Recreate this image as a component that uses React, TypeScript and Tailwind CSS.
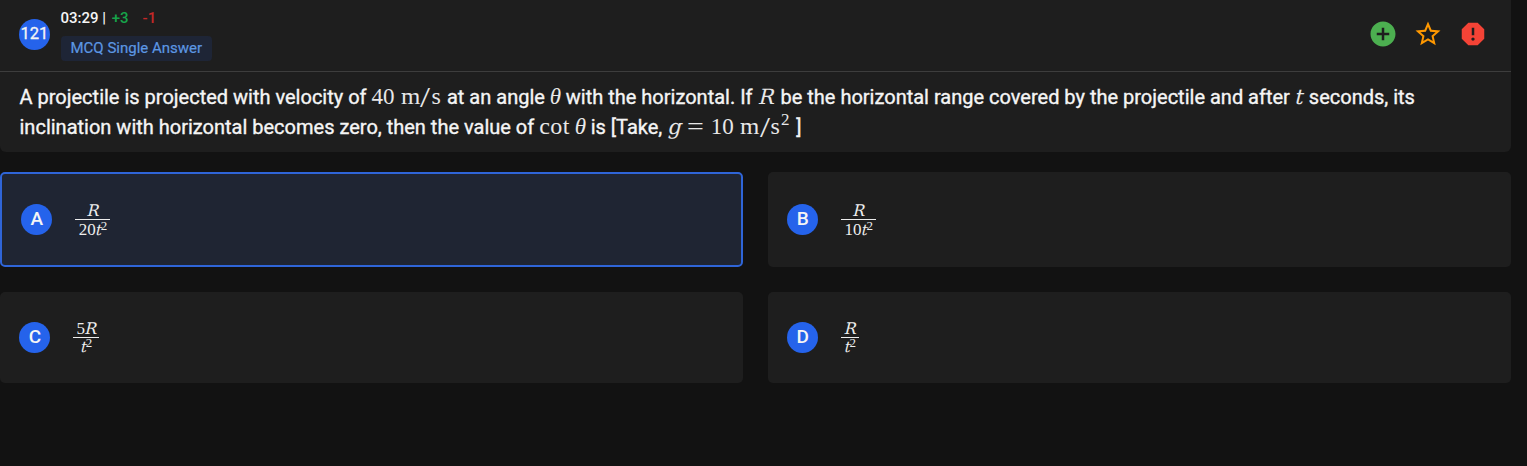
import React from "react";
import { MdAddCircle, MdReport, MdStarBorder } from "react-icons/md";

const options = [
  { label: "A", numerator: "R", coefficient: "20", bar: "w-[35px]", selected: true },
  { label: "B", numerator: "R", coefficient: "10", bar: "w-[35px]", selected: false },
  { label: "C", numerator: "5R", coefficient: "", bar: "w-[26px]", selected: false },
  { label: "D", numerator: "R", coefficient: "", bar: "w-[18px]", selected: false },
];

const Variable = ({
  children,
  className = "text-[21px]",
}: {
  children: React.ReactNode;
  className?: string;
}) => (
  <i className={`font-['DejaVu_Math_TeX_Gyre','Liberation_Serif',serif] ${className}`}>
    {children}
  </i>
);

const Formula = ({
  children,
  className = "",
}: {
  children: React.ReactNode;
  className?: string;
}) => (
  <span
    className={`inline-flex items-baseline h-5 whitespace-nowrap font-['Liberation_Serif',serif] font-normal text-[23px] leading-[20px] text-[#e8e8e8] [-webkit-text-stroke:0] ${className}`}
  >
    {children}
  </span>
);

const MetersPerSecond = () => (
  <>
    <span className="inline-block origin-left scale-x-108">m</span>
    <span className="ml-[2px] w-[11px] text-[30px] leading-[20px] origin-left scale-x-120 translate-y-[3px]">
      /
    </span>
    <span className="text-[24px]">s</span>
  </>
);

const Fraction = ({
  numerator,
  coefficient,
  bar,
}: {
  numerator: string;
  coefficient: string;
  bar: string;
}) => (
  <div
    className={`flex flex-col items-center mt-px font-['Liberation_Serif',serif] font-normal text-[17px] text-[#ededed] ${bar}`}
  >
    <span className="flex items-center h-[17px] leading-[18px]">
      {numerator.replace("R", "")}
      <Variable className="ml-[-1px] text-[16px] leading-[20px]">R</Variable>
    </span>
    <span className="bg-[#ededed] w-full h-px" />
    <span className="flex items-baseline h-[18px] leading-[19px]">
      {coefficient}
      <Variable className="ml-[-1px] text-[15px] leading-[19px]">t</Variable>
      <span className="-translate-y-[5px] text-[13px] leading-none">2</span>
    </span>
  </div>
);

const QuestionHeader = () => (
  <header className="flex justify-between items-center pr-[23px] pl-[19.5px] border-[#3d3d3d] border-b h-[72px]">
    <div className="flex items-center gap-[10.5px]">
      <div className="flex justify-center items-center bg-[#2563eb] mt-[-3px] ml-[-0.5px] rounded-full w-[31px] h-[31px] font-normal text-[16.5px] [-webkit-text-stroke:0.3px]">
        121
      </div>
      <div className="flex flex-col items-start gap-2 mt-[-2px]">
        <div className="flex font-medium text-[15px] leading-5 whitespace-pre">
          03:29 | <span className="ml-[2px] text-[#16a34a]">+3</span>
          <span className="ml-[14px] text-[#c52828]">-1</span>
        </div>
        <div className="bg-[#1e2536] px-[10px] rounded h-[25px] font-normal text-[#5c97e3] text-[15px] leading-6 [-webkit-text-stroke:0.2px]">
          MCQ Single Answer
        </div>
      </div>
    </div>
    <div className="flex items-center gap-[15px] mt-[-3px]">
      <MdAddCircle className="text-[#4caf50]" size={30} />
      <MdStarBorder className="text-[#ff9800]" size={30} />
      <MdReport className="text-[#f44336]" size={30} />
    </div>
  </header>
);

const App = () => {
  return (
    <main className="bg-[#121212] pr-[16.5px] h-[466px] overflow-hidden font-['Roboto',sans-serif] font-medium text-[#f5f5f5]">
      <section className="bg-[#1e1e1e] rounded-b-md h-[152px]">
        <QuestionHeader />
        <div className="px-[19.5px] pt-[10px] font-normal text-[20px] leading-[30px] whitespace-nowrap [-webkit-text-stroke:0.35px]">
          <p className="h-[30px]">
            A projectile is projected with velocity of{" "}
            <Formula className="w-[70.5px]">
              40<span className="w-[6px]" />
              <MetersPerSecond />
            </Formula>{" "}
            at an angle{" "}
            <Formula className="w-[11px]">
              <i>θ</i>
            </Formula>{" "}
            with the horizontal. If{" "}
            <Formula className="w-[18px]">
              <Variable>R</Variable>
            </Formula>{" "}
            be the horizontal range covered by the projectile and after{" "}
            <Formula className="w-[9px]">
              <Variable className="ml-[-1px] text-[21px]">t</Variable>
            </Formula>{" "}
            seconds, its
          </p>
          <p className="h-[30px]">
            inclination with horizontal becomes zero, then the value of{" "}
            <Formula className="w-[46.5px]">
              <span className="text-[24px] tracking-[0.4px]">cot</span>
              <i className="ml-[5px]">θ</i>
            </Formula>{" "}
            is [Take,{" "}
            <Formula className="w-[124px]">
              <Variable>g</Variable>
              <span className="mr-[9px] ml-[8px] origin-center scale-x-130">=</span>
              10
              <span className="w-[6px]" />
              <MetersPerSecond />
              <span className="-translate-y-[9px] ml-px text-[17px] leading-none">
                2
              </span>
            </Formula>{" "}
            ]
          </p>
        </div>
      </section>
      <section className="gap-[25px] grid grid-cols-2 grid-rows-[95px_91px] mt-5">
        {options.map(({ label, selected, ...fraction }) => (
          <div
            key={label}
            className={`flex items-center gap-[23px] rounded-[5px] px-[19.4px] ${
              selected
                ? "border-2 border-[#2f65d8] bg-[#1f2533]"
                : "bg-[#1e1e1e]"
            }`}
          >
            <div className="flex justify-center items-center bg-[#2563eb] rounded-full w-[31px] h-[31px] text-[19px]">
              {label}
            </div>
            <Fraction {...fraction} />
          </div>
        ))}
      </section>
    </main>
  );
};

export default App;
